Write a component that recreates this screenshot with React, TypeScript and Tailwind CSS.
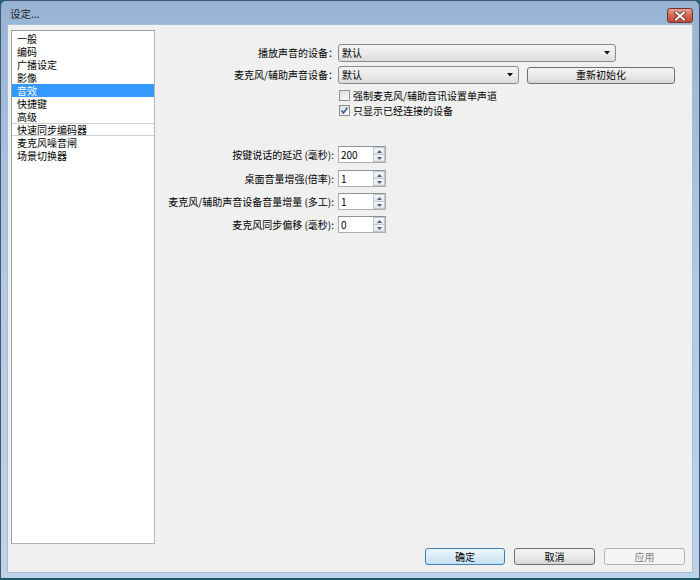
import React from 'react';

const listItems = [
  { label: '一般' },
  { label: '编码' },
  { label: '广播设定' },
  { label: '影像' },
  { label: '音效', selected: true },
  { label: '快捷键' },
  { label: '高级' },
  { label: '快速同步编码器', divided: true },
  { label: '麦克风噪音闸' },
  { label: '场景切换器' },
];

const spinRows = [
  { label: '按键说话的延迟 (毫秒):', value: '200', mt: 'mt-[28px]' },
  { label: '桌面音量增强(倍率):', value: '1', mt: 'mt-[7px]' },
  { label: '麦克风/辅助声音设备音量增量 (多工):', value: '1', mt: 'mt-[6px]' },
  { label: '麦克风同步偏移 (毫秒):', value: '0', mt: 'mt-[6px]' },
];

const ComboBox = ({ width, value }: { width: string; value: string }) => (
  <div
    className={`${width} h-[18px] flex items-center justify-between rounded-[3px] border border-[#8a8a8a] bg-gradient-to-b from-[#f4f4f4] via-[#ebebeb] to-[#dcdcdc] pl-[3px] pr-[5px]`}
  >
    <span>{value}</span>
    <svg width="6" height="4" viewBox="0 0 6 4">
      <path d="M0 0 H6 L3 3.5 Z" fill="#111" />
    </svg>
  </div>
);

const Checkbox = ({ checked, label }: { checked?: boolean; label: string }) => (
  <div className="h-[15px] flex items-center">
    <div className="w-[11px] h-[11px] border border-[#8f8f8f] bg-gradient-to-br from-[#dedede] to-[#fbfbfb] flex items-center justify-center">
      {checked && (
        <svg width="9" height="9" viewBox="0 0 9 9">
          <path d="M1.5 4.5 L3.5 7 L7.5 1.5" stroke="#3b5998" strokeWidth="1.6" fill="none" />
        </svg>
      )}
    </div>
    <span className="ml-[3px]">{label}</span>
  </div>
);

const SpinBox = ({ value }: { value: string }) => (
  <div className="w-[48px] h-[17px] flex border border-[#abadb3] border-t-[#8e9096] bg-white">
    <span className="flex-1 pl-[2px] flex items-center">{value}</span>
    <div className="w-[12px] flex flex-col">
      <div className="flex-1 flex items-center justify-center border border-[#c3c6cb] bg-gradient-to-b from-[#f7f7f7] to-[#e3e6ea]">
        <svg width="5" height="3" viewBox="0 0 5 3">
          <path d="M0 3 H5 L2.5 0 Z" fill="#4d6185" />
        </svg>
      </div>
      <div className="flex-1 flex items-center justify-center border border-t-0 border-[#c3c6cb] bg-gradient-to-b from-[#f7f7f7] to-[#e3e6ea]">
        <svg width="5" height="3" viewBox="0 0 5 3">
          <path d="M0 0 H5 L2.5 3 Z" fill="#4d6185" />
        </svg>
      </div>
    </div>
  </div>
);

const DialogButton = ({
  label,
  variant = 'normal',
  width = 'w-[81px]',
}: {
  label: string;
  variant?: 'normal' | 'default' | 'disabled';
  width?: string;
}) => {
  const styles = {
    normal: 'border-[#707070] bg-gradient-to-b from-[#f2f2f2] via-[#ebebeb] to-[#d6d6d6] text-black',
    default: 'border-[#3c7fb1] bg-gradient-to-b from-[#eaf6fd] via-[#dcecf8] to-[#c4e0f3] text-black',
    disabled: 'border-[#adb2b5] bg-[#f4f4f4] text-[#838383]',
  };
  return (
    <div
      className={`${width} h-[17px] flex items-center justify-center rounded-[3px] border ${styles[variant]}`}
    >
      {label}
    </div>
  );
};

export default function App() {
  return (
    <div className="w-[700px] h-[580px] bg-[#1f6273] font-['Noto_Sans_CJK_SC','Noto_Sans',sans-serif] text-[10px] leading-none text-black">
      <div className="w-full h-full flex flex-col rounded-t-[6px] border border-[#44546a] border-b-2 border-b-[#1b5a6b] bg-gradient-to-b from-[#98b4d4] via-[#b2cae4] to-[#bed3ea]">
        {/* title bar */}
        <div className="h-[23px] flex justify-between">
          <span className="pl-[9px] pt-[8px] text-[10.5px] text-[#1a1a1a]">设定...</span>
          <div className="mt-[7px] mr-[6px] w-[26px] h-[15px] rounded-[3px] border border-[#7a3030] bg-gradient-to-b from-[#e8a493] via-[#d0654f] to-[#c24a36] flex items-center justify-center">
            <svg width="12" height="10" viewBox="0 0 12 10">
              <path d="M2 1.5 L10 8.5 M10 1.5 L2 8.5" stroke="#5a2a22" strokeWidth="3.6" strokeLinecap="square" />
              <path d="M2 1.5 L10 8.5 M10 1.5 L2 8.5" stroke="#ffffff" strokeWidth="2" strokeLinecap="square" />
            </svg>
          </div>
        </div>

        {/* client area */}
        <div className="flex-1 flex px-[6px] pb-[5px]">
          <div className="flex-1 flex flex-col border border-[#a7bed8] bg-[#f0f0f0]">
            <div className="h-[519px] flex pt-[5px] pl-[3px]">
              {/* category list */}
              <div className="w-[144px] h-[514px] border border-[#9a9a9a] border-r-[#b9b9b9] border-b-[#b0b0b0] bg-white pt-[1px]">
                {listItems.map((item) => (
                  <div
                    key={item.label}
                    className={`h-[13px] flex items-center pl-[5px] ${
                      item.selected ? 'bg-[#3399ff] text-white' : ''
                    } ${item.divided ? 'border-y border-[#cfcfcf]' : ''}`}
                  >
                    {item.label}
                  </div>
                ))}
              </div>

              {/* audio settings */}
              <div className="flex-1 flex flex-col">
                <div className="mt-[14px] flex items-center">
                  <span className="w-[183px] text-right">播放声音的设备：</span>
                  <ComboBox width="w-[278px]" value="默认" />
                </div>
                <div className="mt-[4px] flex items-center">
                  <span className="w-[183px] text-right">麦克风/辅助声音设备：</span>
                  <ComboBox width="w-[181px]" value="默认" />
                  <div className="ml-[8px]">
                    <DialogButton label="重新初始化" width="w-[148px]" />
                  </div>
                </div>
                <div className="mt-[4px] pl-[184px]">
                  <Checkbox label="强制麦克风/辅助音讯设置单声道" />
                  <Checkbox checked label="只显示已经连接的设备" />
                </div>

                {spinRows.map((row) => (
                  <div key={row.label} className={`${row.mt} flex items-center`}>
                    <span className="w-[181px] pr-[2px] text-right">{row.label}</span>
                    <div className="ml-[2px]">
                      <SpinBox value={row.value} />
                    </div>
                  </div>
                ))}
              </div>
            </div>

            {/* dialog buttons */}
            <div className="mt-[4px] flex justify-end gap-[9px] pr-[7px]">
              <DialogButton label="确定" variant="default" width="w-[80px]" />
              <DialogButton label="取消" />
              <DialogButton label="应用" variant="disabled" />
            </div>
          </div>
        </div>
      </div>
    </div>
  );
}
